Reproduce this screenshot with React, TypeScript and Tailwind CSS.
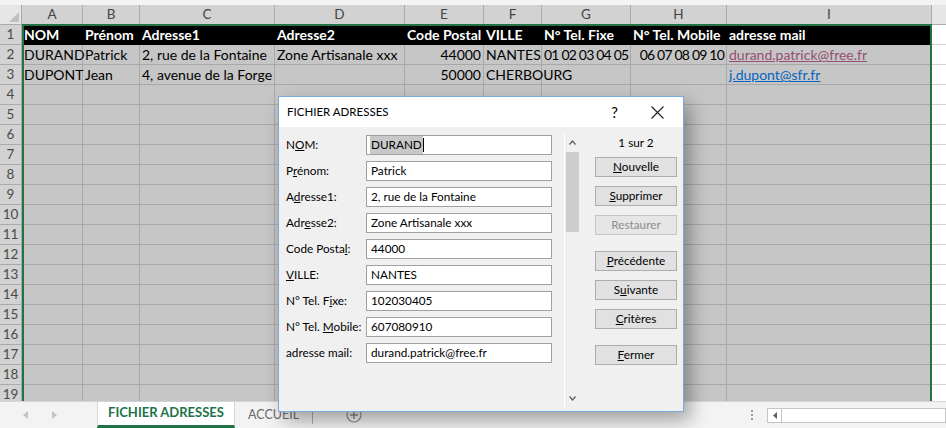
import { ReactNode } from "react";

type Col = { key: string; w: string; label: string };

const cols: Col[] = [
  { key: "A", w: "w-[61px]", label: "A" },
  { key: "B", w: "w-[57px]", label: "B" },
  { key: "C", w: "w-[135px]", label: "C" },
  { key: "D", w: "w-[130px]", label: "D" },
  { key: "E", w: "w-[79px]", label: "E" },
  { key: "F", w: "w-[58px]", label: "F" },
  { key: "G", w: "w-[89px]", label: "G" },
  { key: "H", w: "w-[96px]", label: "H" },
  { key: "I", w: "w-[205px]", label: "I" },
];

type Cell = { v: string; right?: boolean; tight?: boolean; link?: "visited" | "new" };

const data: Cell[][] = [
  [
    { v: "NOM" },
    { v: "Prénom" },
    { v: "Adresse1" },
    { v: "Adresse2" },
    { v: "Code Postal" },
    { v: "VILLE" },
    { v: "N° Tel. Fixe" },
    { v: "N° Tel. Mobile" },
    { v: "adresse mail" },
  ],
  [
    { v: "DURAND" },
    { v: "Patrick" },
    { v: "2, rue de la Fontaine" },
    { v: "Zone Artisanale xxx" },
    { v: "44000", right: true },
    { v: "NANTES" },
    { v: "01 02 03 04 05", tight: true },
    { v: "06 07 08 09 10", right: true, tight: true },
    { v: "durand.patrick@free.fr", link: "visited" },
  ],
  [
    { v: "DUPONT" },
    { v: "Jean" },
    { v: "4, avenue de la Forge" },
    { v: "" },
    { v: "50000", right: true },
    { v: "CHERBOURG" },
    { v: "" },
    { v: "" },
    { v: "j.dupont@sfr.fr", link: "new" },
  ],
];

const rowNums = Array.from({ length: 19 }, (_, i) => i + 1);

const fields: { label: ReactNode; value: string }[] = [
  { label: <>N<u>O</u>M:</>, value: "DURAND" },
  { label: <>P<u>r</u>énom:</>, value: "Patrick" },
  { label: <>A<u>d</u>resse1:</>, value: "2, rue de la Fontaine" },
  { label: <>Adr<u>e</u>sse2:</>, value: "Zone Artisanale xxx" },
  { label: <>Code Posta<u>l</u>:</>, value: "44000" },
  { label: <><u>V</u>ILLE:</>, value: "NANTES" },
  { label: <>N° Tel. F<u>i</u>xe:</>, value: "102030405" },
  { label: <>N° Tel. <u>M</u>obile:</>, value: "607080910" },
  { label: <>adresse mail:</>, value: "durand.patrick@free.fr" },
];

const Btn = ({ children, disabled, mt }: { children: ReactNode; disabled?: boolean; mt: string }) => (
  <div
    className={`${mt} h-[20px] w-[82px] border flex items-center justify-center text-[11.75px] ${
      disabled ? "text-[#8d8d8d] border-[#c4c4c4] bg-[#e6e6e6]" : "text-black border-[#adadad] bg-[#e1e1e1]"
    }`}
  >
    {children}
  </div>
);

const Dialog = () => (
  <div
    className="absolute left-[278px] top-[96px] w-[406px] h-[316px] border border-[#7aa8d8] bg-[#f0f0f0] shadow-[6px_8px_18px_rgba(0,0,0,0.35)] flex flex-col"
    style={{ fontFamily: "Lato, 'Liberation Sans', sans-serif" }}
  >
    <div className="h-[30px] bg-white flex items-center pl-[8px] text-[11.5px] text-black shrink-0">
      <span>FICHIER ADRESSES</span>
      <span className="ml-auto text-[15px] mr-[33px]">?</span>
      <svg width="13" height="13" viewBox="0 0 13 13" className="mr-[19px]">
        <path d="M0.5 0.5 L12.5 12.5 M12.5 0.5 L0.5 12.5" stroke="#222" strokeWidth="1.1" fill="none" />
      </svg>
    </div>
    <div className="flex flex-1">
      <div className="w-[285px] pl-[7px] pt-[8px] flex flex-col gap-[6px]">
        {fields.map((f, i) => (
          <div key={i} className="flex items-center h-[20px]">
            <div className="w-[80px] text-[11.75px] text-black whitespace-nowrap">{f.label}</div>
            <div className="w-[186px] h-[20px] bg-white border border-[#a0a0a0] flex items-center pl-[3px] text-[11.75px] text-black">
              {i === 0 ? (
                <>
                  <span className="bg-[#c8c8c8] px-[1px]">{f.value}</span>
                  <span className="w-px h-[14px] bg-black"></span>
                </>
              ) : (
                <span className="pl-[1px]">{f.value}</span>
              )}
            </div>
          </div>
        ))}
      </div>
      <div className="mt-[6px] h-[275px] flex">
        <div className="w-px bg-white"></div>
        <div className="w-[15px] flex flex-col bg-[#f0f0f0]">
          <div className="h-[19px] flex items-center justify-center">
            <svg width="7" height="5" viewBox="0 0 7 5">
              <path d="M0.5 4.5 L3.5 1 L6.5 4.5" stroke="#606060" strokeWidth="1.3" fill="none" />
            </svg>
          </div>
          <div className="h-[80px] bg-[#cdcdcd] mx-[1px]"></div>
          <div className="flex-1"></div>
          <div className="h-[19px] flex items-center justify-center">
            <svg width="7" height="5" viewBox="0 0 7 5">
              <path d="M0.5 0.5 L3.5 4 L6.5 0.5" stroke="#606060" strokeWidth="1.3" fill="none" />
            </svg>
          </div>
        </div>
      </div>
      <div className="ml-[15px] pt-[6px] flex flex-col">
        <div className="h-[20px] w-[82px] flex items-center justify-center text-[11.75px] text-black">1 sur 2</div>
        <Btn mt="mt-[4px]">
          <span><u>N</u>ouvelle</span>
        </Btn>
        <Btn mt="mt-[9px]">
          <span><u>S</u>upprimer</span>
        </Btn>
        <Btn mt="mt-[9px]" disabled>
          <span>Restaurer</span>
        </Btn>
        <Btn mt="mt-[16px]">
          <span><u>P</u>récédente</span>
        </Btn>
        <Btn mt="mt-[9px]">
          <span>S<u>u</u>ivante</span>
        </Btn>
        <Btn mt="mt-[9px]">
          <span><u>C</u>ritères</span>
        </Btn>
        <Btn mt="mt-[16px]">
          <span><u>F</u>ermer</span>
        </Btn>
      </div>
    </div>
  </div>
);

const SheetTabs = () => (
  <div className="h-[27px] bg-[#f3f3f3] flex items-center shrink-0 relative border-t border-[#d4d4d4]">
    <div className="w-[97px] flex items-center">
      <svg width="5" height="8" viewBox="0 0 5 8" className="ml-[23px]">
        <path d="M5 0 L0 4 L5 8 Z" fill="#c4c4c4" />
      </svg>
      <svg width="5" height="8" viewBox="0 0 5 8" className="ml-[24px]">
        <path d="M0 0 L5 4 L0 8 Z" fill="#c4c4c4" />
      </svg>
    </div>
    <div className="h-full w-[138px] bg-white flex items-center justify-center border-b-[3px] border-[#217346] border-x border-x-[#d4d4d4] -mt-px">
      <span className="text-[13px] font-bold text-[#217346]">FICHIER ADRESSES</span>
    </div>
    <span className="ml-[13px] text-[12.5px] text-[#6a6a6a]">ACCUEIL</span>
    <div className="ml-[13px] w-px h-[18px] bg-[#b0b0b0]"></div>
    <svg width="16" height="16" viewBox="0 0 16 16" className="ml-[33px]">
      <circle cx="8" cy="8" r="7" fill="none" stroke="#8a8a8a" strokeWidth="1.2" />
      <path d="M8 4 V12 M4 8 H12" stroke="#8a8a8a" strokeWidth="1.4" />
    </svg>
    <div className="ml-auto flex items-center">
      <div className="flex flex-col gap-[2px] mr-[14px]">
        <div className="w-[2px] h-[2px] bg-[#9a9a9a]"></div>
        <div className="w-[2px] h-[2px] bg-[#9a9a9a]"></div>
        <div className="w-[2px] h-[2px] bg-[#9a9a9a]"></div>
      </div>
      <div className="w-[179px] h-[15px] bg-white border border-[#c6c6c6] flex items-center">
        <div className="w-[14px] h-full border-r border-[#c6c6c6] flex items-center justify-center">
          <svg width="4" height="7" viewBox="0 0 4 7">
            <path d="M4 0 L0 3.5 L4 7 Z" fill="#606060" />
          </svg>
        </div>
      </div>
    </div>
  </div>
);

export default function App() {
  return (
    <div
      className="w-[946px] h-[428px] relative overflow-hidden bg-[#f3f3f3] flex flex-col"
      style={{ fontFamily: "Lato, 'Liberation Sans', sans-serif" }}
    >
      <div className="h-[5px] bg-[#f3f3f3] shrink-0"></div>
      <div className="flex-1 overflow-hidden relative">
        {/* column headers */}
        <div className="flex h-[20px] bg-[#e6e6e6]">
          <div className="w-[22px] h-full border-r border-b border-[#ababab] relative bg-[#e6e6e6]">
            <svg width="10" height="10" viewBox="0 0 10 10" className="absolute right-[2px] bottom-[2px]">
              <path d="M10 0 L10 10 L0 10 Z" fill="#c0c0c0" />
            </svg>
          </div>
          {cols.map((c) => (
            <div
              key={c.key}
              className={`${c.w} h-full shrink-0 bg-[#d2d2d2] border-r border-b border-[#ababab] flex items-center justify-center text-[13.5px] text-[#444]`}
            >
              {c.label}
            </div>
          ))}
          <div className="flex-1 h-full border-b border-[#ababab] bg-[#e6e6e6]"></div>
        </div>
        {/* rows */}
        {rowNums.map((n) => {
          const row = data[n - 1];
          return (
            <div key={n} className="flex h-[20px]">
              <div className="w-[22px] h-full shrink-0 bg-[#d2d2d2] border-r border-b border-[#ababab] flex items-center justify-center text-[13.5px] text-[#4a4a4a]">
                {n}
              </div>
              {cols.map((c, ci) => {
                const cell = row ? row[ci] : undefined;
                const head = n === 1;
                return (
                  <div
                    key={c.key}
                    className={`${c.w} h-full shrink-0 border-b border-r flex items-center px-[2px] text-[14px] whitespace-nowrap overflow-visible relative ${
                      head
                        ? "bg-black border-black text-white font-bold"
                        : "bg-[#c6c6c6] border-[#a9a9a9] text-black"
                    } ${cell?.right ? "justify-end" : ""} ${cell?.tight ? "tracking-[-0.8px]" : ""}`}
                  >
                    {cell?.link ? (
                      <span
                        className={`underline ${
                          cell.link === "visited" ? "text-[#954f72]" : "text-[#0563c1]"
                        }`}
                      >
                        {cell.v}
                      </span>
                    ) : (
                      <span className="relative z-10">{cell?.v}</span>
                    )}
                  </div>
                );
              })}
              <div className="flex-1 h-full bg-white border-b border-[#d4d4d4]"></div>
            </div>
          );
        })}
        {/* selection outline */}
        <div className="absolute left-[22px] top-[19px] w-[910px] h-[400px] border-2 border-[#217346] pointer-events-none"></div>
      </div>
      <SheetTabs />
      <Dialog />
    </div>
  );
}
